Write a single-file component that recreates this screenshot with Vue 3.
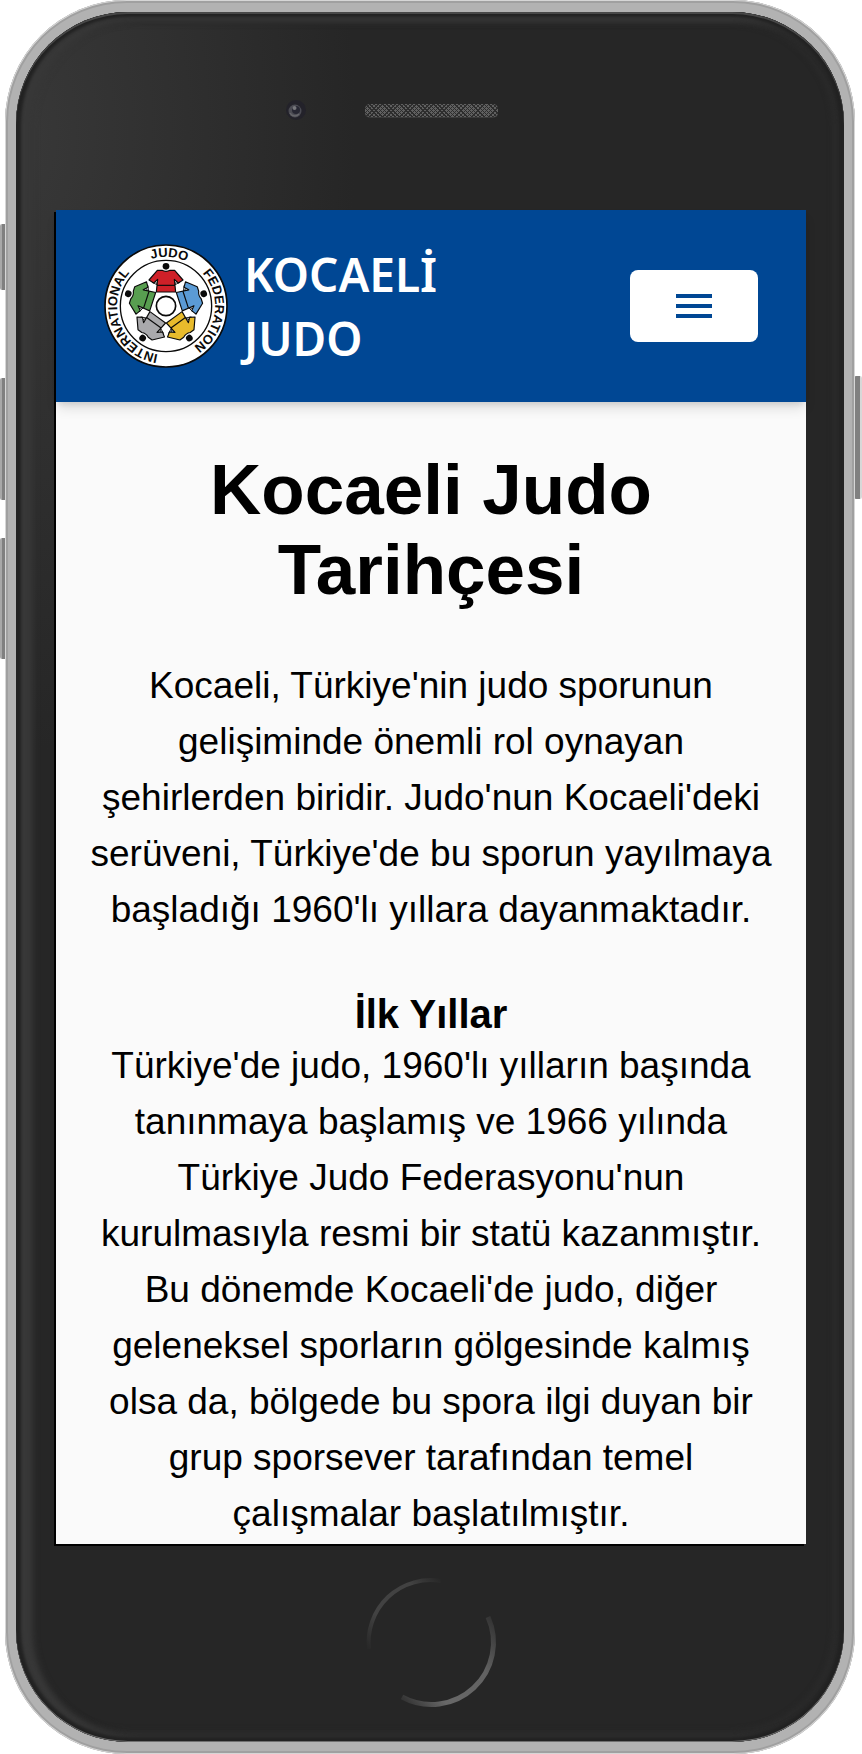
<script setup>
const figures = [
  { color: '#cf2028', angle: 0 },
  { color: '#5b9bd5', angle: 72 },
  { color: '#e8bb2c', angle: 144 },
  { color: '#a9a9ac', angle: 216 },
  { color: '#589e50', angle: 288 },
]
</script>

<template>
  <div class="stage">
    <span class="key mute"></span>
    <span class="key volume-up"></span>
    <span class="key volume-down"></span>
    <span class="key power"></span>
    <div class="device">
      <div class="body">
        <div class="forehead">
          <svg class="camera" viewBox="0 0 24 24" aria-hidden="true">
            <circle cx="13" cy="11" r="10" fill="#23222a" />
            <circle cx="12" cy="12" r="6.500" fill="#4b4b53" />
            <circle cx="13" cy="11" r="4" fill="#272733" />
            <circle cx="11.500" cy="9" r="2" fill="#77777c" />
            <path d="M7 14a5.500 5.500 0 0 0 9 1" stroke="#66666b" stroke-width="1.500" fill="none" />
          </svg>
          <div class="speaker"></div>
        </div>

        <div class="screen">
          <header class="navbar">
            <a class="brand" href="#">
              <svg class="logo" viewBox="42 42 372 372" role="img" aria-label="International Judo Federation">
                <defs>
                  <path id="ring" d="M228 375A147 147 0 0 1 228 81A147 147 0 0 1 228 375A147 147 0 0 1 228 81" />
                </defs>
                <circle cx="228" cy="228" r="183" fill="#fff" stroke="#0a0a0a" stroke-width="5" />
                <circle cx="228" cy="228" r="137" fill="#fff" stroke="#0a0a0a" stroke-width="4" />
                <g class="ring-text">
                  <text><textPath href="#ring" startOffset="24">INTERNATIONAL</textPath></text>
                  <text><textPath href="#ring" startOffset="417">JUDO</textPath></text>
                  <text><textPath href="#ring" startOffset="584">FEDERATION</textPath></text>
                </g>
                <g
                  v-for="f in figures"
                  :key="f.angle"
                  :transform="`rotate(${f.angle} 228 228)`"
                  stroke="#0a0a0a"
                  stroke-width="3.500"
                  stroke-linejoin="round"
                >
                  <circle cx="228" cy="109" r="10" fill="#0a0a0a" stroke="none" />
                  <path d="M194 151L186 157L203 165ZM262 151L270 157L253 165Z" fill="#fff" stroke-width="2.500" />
                  <path
                    d="M202 121H216Q228 127 240 121H254L279 150L265 159L253 148L257 186H199L203 148L191 159L177 150Z"
                    :fill="f.color"
                  />
                  <path d="M201 166H255" fill="none" />
                </g>
                <circle cx="228" cy="228" r="29" fill="#fff" stroke="#0a0a0a" stroke-width="5" />
              </svg>
              <span class="name">KOCAELİ JUDO</span>
            </a>
            <button class="menu" type="button" aria-label="Menü">
              <svg viewBox="0 0 24 24" fill="currentColor" aria-hidden="true">
                <path d="M3 18h18v-2H3v2zm0-5h18v-2H3v2zm0-7v2h18V6H3z" />
              </svg>
            </button>
          </header>

          <main class="content">
            <h1>Kocaeli Judo Tarihçesi</h1>
            <p>
              Kocaeli, Türkiye'nin judo sporunun gelişiminde önemli rol oynayan şehirlerden biridir.
              Judo'nun Kocaeli'deki serüveni, Türkiye'de bu sporun yayılmaya başladığı 1960'lı yıllara
              dayanmaktadır.
            </p>
            <h2>İlk Yıllar</h2>
            <p>
              Türkiye'de judo, 1960'lı yılların başında tanınmaya başlamış ve 1966 yılında Türkiye Judo
              Federasyonu'nun kurulmasıyla resmi bir statü kazanmıştır. Bu dönemde Kocaeli'de judo, diğer
              geleneksel sporların gölgesinde kalmış olsa da, bölgede bu spora ilgi duyan bir grup
              sporsever tarafından temel çalışmalar başlatılmıştır.
            </p>
          </main>
        </div>

        <div class="chin">
          <svg class="home" viewBox="0 0 136 136" fill="none" aria-hidden="true">
            <defs>
              <linearGradient id="arcTop" gradientUnits="userSpaceOnUse" x1="5" y1="76" x2="80" y2="6">
                <stop offset="0" stop-color="#262626" />
                <stop offset="0.300" stop-color="#424242" />
                <stop offset="0.750" stop-color="#424242" />
                <stop offset="1" stop-color="#262626" />
              </linearGradient>
              <linearGradient id="arcBottom" gradientUnits="userSpaceOnUse" x1="128" y1="38" x2="36" y2="124">
                <stop offset="0" stop-color="#303030" />
                <stop offset="0.350" stop-color="#626262" />
                <stop offset="0.750" stop-color="#686868" />
                <stop offset="1" stop-color="#303030" />
              </linearGradient>
            </defs>
            <path d="M6 74A62 62 0 0 1 78 6" stroke="url(#arcTop)" stroke-width="4" />
            <path d="M125 42A62 62 0 0 1 39 122" stroke="url(#arcBottom)" stroke-width="5" />
          </svg>
        </div>
      </div>
    </div>
  </div>
</template>

<style>
body {
  margin: 0;
  background: #fff;
}
</style>

<style scoped>
.stage {
  position: relative;
  padding: 0 7px 0 5px;
}

.key {
  position: absolute;
  left: 0;
  width: 8px;
  border-radius: 2px;
  background: linear-gradient(90deg, #a8a8a8 2px, #808080 2px);
}

.mute {
  top: 224px;
  height: 66px;
}

.volume-up {
  top: 378px;
  height: 122px;
}

.volume-down {
  top: 538px;
  height: 121px;
}

.power {
  left: auto;
  right: 0;
  top: 376px;
  height: 123px;
  background: linear-gradient(270deg, #d8d8d8 2px, #808080 2px);
}

.device {
  position: relative;
  padding: 12px 11px;
  border-radius: 122px;
  background: #b2b2b2;
  box-shadow:
    inset 0 0 0 1px #d6d6d6,
    inset 0 0 0 3px #a0a0a0;
}

.body {
  padding: 0 38px 0 40px;
  border-radius: 112px;
  background: radial-gradient(ellipse 340px 620px at 0 120px, #383838, #303030 45%, #262626);
  box-shadow:
    inset 0 2px 0 #484848,
    inset 0 -1px 0 #707070,
    inset 0 0 3px 5px #222,
    inset 10px 2px 6px 7px #383838,
    inset 0 0 5px 12px #2a2a2a;
}

.forehead {
  display: grid;
  grid-template-columns: 1fr 133px 1fr;
  align-items: center;
  height: 198px;
}

.camera {
  justify-self: end;
  width: 24px;
  height: 24px;
  margin-right: 58px;
}

.speaker {
  grid-column: 2;
  height: 13px;
  border-radius: 5px;
  background:
    repeating-linear-gradient(45deg, #2c2c2c 0 1px, transparent 1px 3px),
    repeating-linear-gradient(135deg, #303030 0 1px, #606060 1px 3px);
  border-bottom: 1px solid #3a3a3a;
}

.screen {
  background: #fafafa;
  box-shadow: -2px 2px 0 #000;
}

.navbar {
  display: flex;
  align-items: center;
  justify-content: space-between;
  padding: 32px 48px;
  background: #004794;
  box-shadow: 0 8px 12px -2px rgba(0, 0, 0, 0.12), 0 4px 6px -2px rgba(0, 0, 0, 0.1);
}

.brand {
  display: flex;
  align-items: center;
  gap: 16px;
  color: #fff;
  text-decoration: none;
}

.logo {
  flex: none;
  width: 124px;
  height: 124px;
}

.ring-text {
  font-family: "Liberation Sans", Arial, sans-serif;
  font-size: 39px;
  font-weight: 700;
  fill: #0a0a0a;
}

.name {
  width: min-content;
  font-family: "Noto Sans", "Open Sans", sans-serif;
  font-size: 46px;
  font-weight: 600;
  line-height: 64px;
}

.menu {
  display: flex;
  align-items: center;
  justify-content: center;
  padding: 12px 40px;
  border: 0;
  border-radius: 8px;
  background: #fff;
  color: #004794;
  cursor: pointer;
}

.menu svg {
  width: 48px;
  height: 48px;
}

.content {
  padding: 48px 32px 2px;
  font-family: "Liberation Sans", Arial, sans-serif;
  color: #000;
  text-align: center;
}

h1 {
  margin: 0 0 48px;
  font-size: 71px;
  line-height: 80px;
}

h2 {
  margin: 52px 0 0;
  font-size: 40px;
  line-height: 48px;
}

p {
  margin: 0;
  font-size: 37px;
  line-height: 56px;
}

.chin {
  display: flex;
  justify-content: center;
  align-items: center;
  height: 198px;
}

.home {
  width: 136px;
  height: 136px;
}
</style>
